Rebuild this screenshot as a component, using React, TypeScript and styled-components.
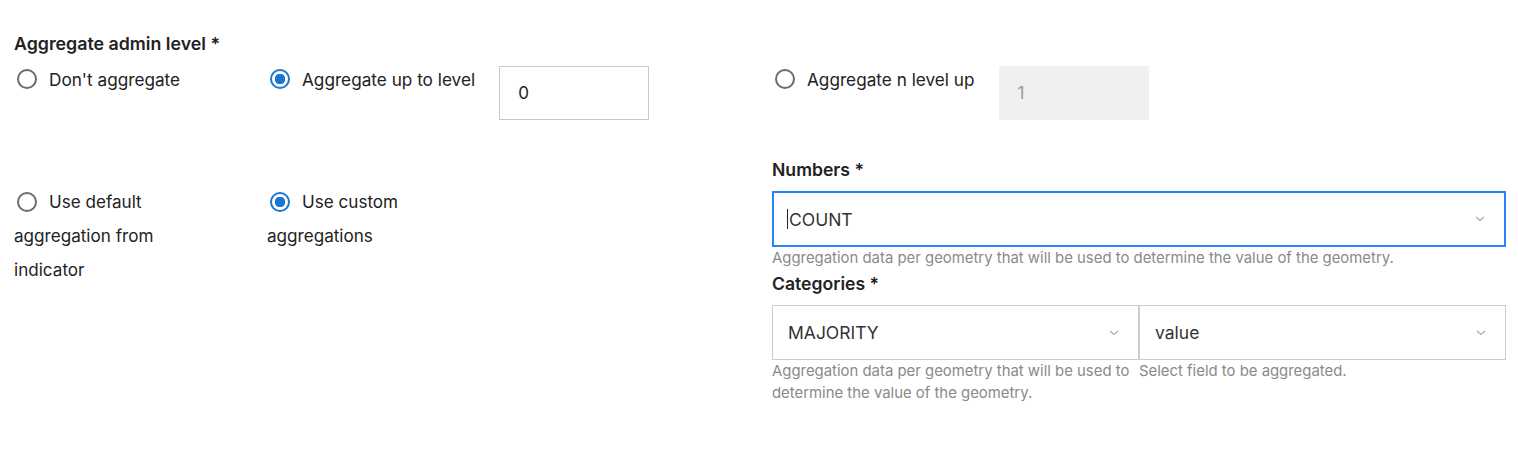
import styled, { createGlobalStyle } from "styled-components";

const GlobalStyle = createGlobalStyle`
    body {
        margin: 0;
        background: #ffffff;
        font-family: Inter, Roboto, "Liberation Sans", sans-serif;
        color: #222;
    }
`;

const Page = styled.div`
    padding: 32px 12px 40px 14px;
`;

const Heading = styled.div`
    font-size: 17.8px;
    line-height: 24px;
    font-weight: 600;
    color: #222;
`;

const Grid = styled.div<{ $top?: number }>`
    display: grid;
    grid-template-columns: 253px 253px 252px 734px;
    margin-top: ${(p) => p.$top ?? 0}px;
`;

const Cell = styled.div<{ $span?: number; $pad?: number }>`
    grid-column: span ${(p) => p.$span ?? 1};
    display: flex;
    align-items: flex-start;
    padding-top: ${(p) => p.$pad ?? 0}px;
`;

const RadioLabel = styled.label`
    display: flex;
    align-items: center;
    gap: 12px;
    height: 24px;
    margin-top: 1px;
    font-size: 17.2px;
    color: #222;
    white-space: nowrap;
`;

const WrapLabel = styled.label`
    display: block;
    width: 170px;
    font-size: 17.1px;
    line-height: 34px;
    color: #222;
`;

const Radio = styled.span<{ $checked?: boolean }>`
    display: inline-block;
    box-sizing: border-box;
    width: 20px;
    height: 20px;
    margin-left: 3px;
    border-radius: 50%;
    border: 2px solid ${(p) => (p.$checked ? "#1976d2" : "#6b6b6b")};
    background: ${(p) =>
        p.$checked
            ? "radial-gradient(circle, #1976d2 0 5px, #fff 5.5px)"
            : "#fff"};
    flex-shrink: 0;
`;

const InlineRadio = styled(Radio)`
    vertical-align: -4px;
    margin-right: 12px;
`;

const NumberInput = styled.div<{ $disabled?: boolean }>`
    box-sizing: border-box;
    width: 150px;
    height: 54px;
    margin-left: 24px;
    padding-left: 18px;
    display: flex;
    align-items: center;
    font-size: 17px;
    color: ${(p) => (p.$disabled ? "#9a9a9a" : "#222")};
    background: ${(p) => (p.$disabled ? "#f0f0f0" : "#fff")};
    border: 1px solid ${(p) => (p.$disabled ? "#f0f0f0" : "#c8c8c8")};
`;

const Panel = styled.div`
    grid-column: span 1;
    display: flex;
    flex-direction: column;
`;

const FieldLabel = styled.div<{ $top?: number }>`
    font-size: 17.6px;
    line-height: 24px;
    font-weight: 600;
    color: #222;
    margin-top: ${(p) => p.$top ?? 0}px;
    margin-bottom: 9px;
`;

const SelectRow = styled.div`
    display: grid;
    grid-template-columns: 1fr 1fr;
`;

const Select = styled.div<{ $focused?: boolean }>`
    box-sizing: border-box;
    height: ${(p) => (p.$focused ? 56 : 55)}px;
    display: flex;
    align-items: center;
    justify-content: space-between;
    padding: 0 19px 0 ${(p) => (p.$focused ? 13 : 15)}px;
    border: ${(p) => (p.$focused ? "2px solid #2684ff" : "1px solid #cccccc")};
    font-size: 17.5px;
    color: #333;
    background: #fff;
`;

const Value = styled.span`
    display: flex;
    align-items: center;
`;

const Caret = styled.span`
    display: inline-block;
    width: 1px;
    height: 20px;
    background: #222;
    margin-right: 1px;
`;

const Helper = styled.div`
    font-size: 14.9px;
    line-height: 22px;
    color: #8a8a8a;
`;

const Chevron = () => (
    <svg width="10" height="6" viewBox="0 0 10 6">
        <path d="M1 1 L5 4.5 L9 1" fill="none" stroke="#aaa" strokeWidth="1.2" />
    </svg>
);

const App = () => {
    return (
        <Page>
            <GlobalStyle />
            <Heading>Aggregate admin level *</Heading>
            <Grid $top={10}>
                <Cell>
                    <RadioLabel>
                        <Radio />
                        Don't aggregate
                    </RadioLabel>
                </Cell>
                <Cell $span={2}>
                    <RadioLabel>
                        <Radio $checked />
                        Aggregate up to level
                    </RadioLabel>
                    <NumberInput>0</NumberInput>
                </Cell>
                <Cell>
                    <RadioLabel>
                        <Radio />
                        Aggregate n level up
                    </RadioLabel>
                    <NumberInput $disabled>1</NumberInput>
                </Cell>
            </Grid>
            <Grid $top={38}>
                <Cell $pad={27}>
                    <WrapLabel>
                        <InlineRadio />
                        Use default aggregation from indicator
                    </WrapLabel>
                </Cell>
                <Cell $pad={27} $span={2}>
                    <WrapLabel>
                        <InlineRadio $checked />
                        Use custom aggregations
                    </WrapLabel>
                </Cell>
                <Panel>
                    <FieldLabel>Numbers *</FieldLabel>
                    <Select $focused>
                        <Value>
                            <Caret />
                            COUNT
                        </Value>
                        <Chevron />
                    </Select>
                    <Helper>
                        Aggregation data per geometry that will be used to
                        determine the value of the geometry.
                    </Helper>
                    <FieldLabel $top={3}>Categories *</FieldLabel>
                    <SelectRow>
                        <div>
                            <Select>
                                <Value>MAJORITY</Value>
                                <Chevron />
                            </Select>
                            <Helper>
                                Aggregation data per geometry that will be used
                                to determine the value of the geometry.
                            </Helper>
                        </div>
                        <div>
                            <Select>
                                <Value>value</Value>
                                <Chevron />
                            </Select>
                            <Helper>Select field to be aggregated.</Helper>
                        </div>
                    </SelectRow>
                </Panel>
            </Grid>
        </Page>
    );
};

export default App;
